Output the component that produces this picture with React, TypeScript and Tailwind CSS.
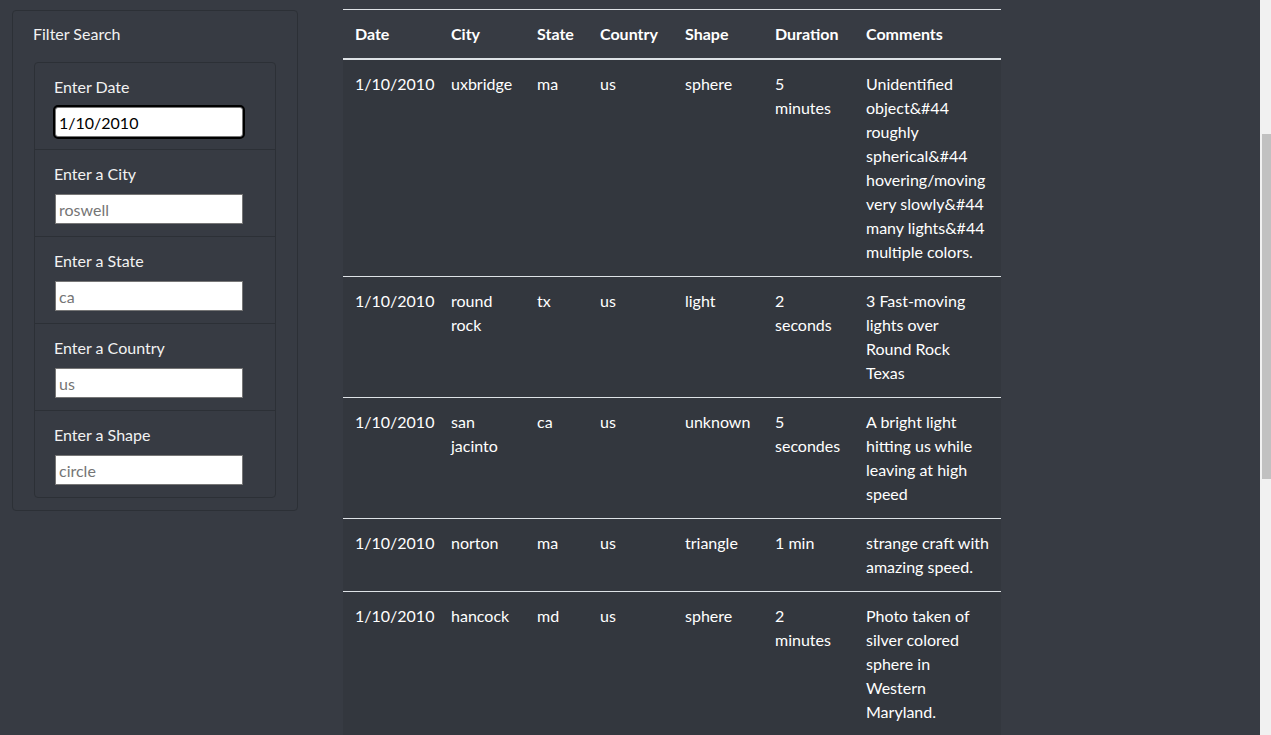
import React from "react";

const rows = [
  ["1/10/2010", "uxbridge", "ma", "us", "sphere", "5 minutes", "Unidentified object&#44 roughly spherical&#44 hovering/moving very slowly&#44 many lights&#44 multiple colors."],
  ["1/10/2010", "round rock", "tx", "us", "light", "2 seconds", "3 Fast-moving lights over Round\u00a0Rock Texas"],
  ["1/10/2010", "san jacinto", "ca", "us", "unknown", "5 secondes", "A bright light hitting us while leaving at high speed"],
  ["1/10/2010", "norton", "ma", "us", "triangle", "1 min", "strange craft with amazing speed."],
  ["1/10/2010", "hancock", "md", "us", "sphere", "2 minutes", "Photo taken of silver colored sphere in Western Maryland."],
];

const filters = [
  { label: "Enter Date", value: "1/10/2010", placeholder: "", focused: true },
  { label: "Enter a City", value: "", placeholder: "roswell" },
  { label: "Enter a State", value: "", placeholder: "ca" },
  { label: "Enter a Country", value: "", placeholder: "us" },
  { label: "Enter a Shape", value: "", placeholder: "circle" },
];

const headers = ["Date", "City", "State", "Country", "Shape", "Duration", "Comments"];
const widths = [96, 86, 63, 85, 90, 91, 147];

export default function App() {
  return (
    <div
      className="flex h-[735px] w-[1271px] overflow-hidden bg-[#373b43] text-white"
      style={{ fontFamily: '"Segoe UI", Lato, "Liberation Sans", sans-serif' }}
    >
      <div className="flex flex-1 items-start">
        <aside className="ml-[12px] mt-[10px] w-[286px] rounded border border-[#2c3036] pb-[12px]">
          <div className="px-[20px] pt-[11px] pb-[13px] text-[16px] leading-[24px] text-[#f2f2f2]">Filter Search</div>
          <ul className="ml-[21px] mr-[21px] mt-[3px] rounded border border-[#2c3036]">
            {filters.map((f, i) => (
              <li
                key={f.label}
                className={`pl-[19px] pr-[20px] pt-[12px] pb-[12px] ${i > 0 ? "border-t border-[#2c3036]" : ""}`}
              >
                <label className="block text-[16px] leading-[24px] text-[#f2f2f2]">{f.label}</label>
                <div className="mt-[8px] pl-[1px]">
                  {f.focused ? (
                    <input
                      readOnly
                      value={f.value}
                      className="box-border h-[30px] w-[188px] rounded-[3px] border border-[#767676] bg-white px-[3px] text-[16px] text-black outline-2 outline-black outline-offset-0 outline"
                    />
                  ) : (
                    <input
                      readOnly
                      placeholder={f.placeholder}
                      className="box-border h-[30px] w-[188px] border border-[#767676] bg-white px-[3px] text-[16px] text-black placeholder:text-[#757575]"
                    />
                  )}
                </div>
              </li>
            ))}
          </ul>
        </aside>
        <div className="ml-[45px] mt-[9px]">
          <table className="w-[658px] table-fixed border-collapse text-[16px] leading-[24px]">
            <colgroup>
              {widths.map((w, i) => (
                <col key={i} style={{ width: w }} />
              ))}
            </colgroup>
            <thead>
              <tr>
                {headers.map((h) => (
                  <th
                    key={h}
                    className="border-t border-b-2 border-t-[#dee2e6] border-b-[#dee2e6] px-[12px] py-[12px] text-left font-bold"
                  >
                    {h}
                  </th>
                ))}
              </tr>
            </thead>
            <tbody className="bg-[#33373e]">
              {rows.map((r, ri) => (
                <tr key={ri} className={ri > 0 ? "border-t border-[#dee2e6]" : ""}>
                  {r.map((c, ci) => (
                    <td key={ci} className="px-[12px] py-[12px] align-top">
                      {c}
                    </td>
                  ))}
                </tr>
              ))}
            </tbody>
          </table>
        </div>
      </div>
      <div className="flex w-[11px] flex-col bg-[#f1f1f1] pl-[2px] pt-[134px]">
        <div className="h-[345px] w-[9px] bg-[#c1c1c1]" />
      </div>
    </div>
  );
}
